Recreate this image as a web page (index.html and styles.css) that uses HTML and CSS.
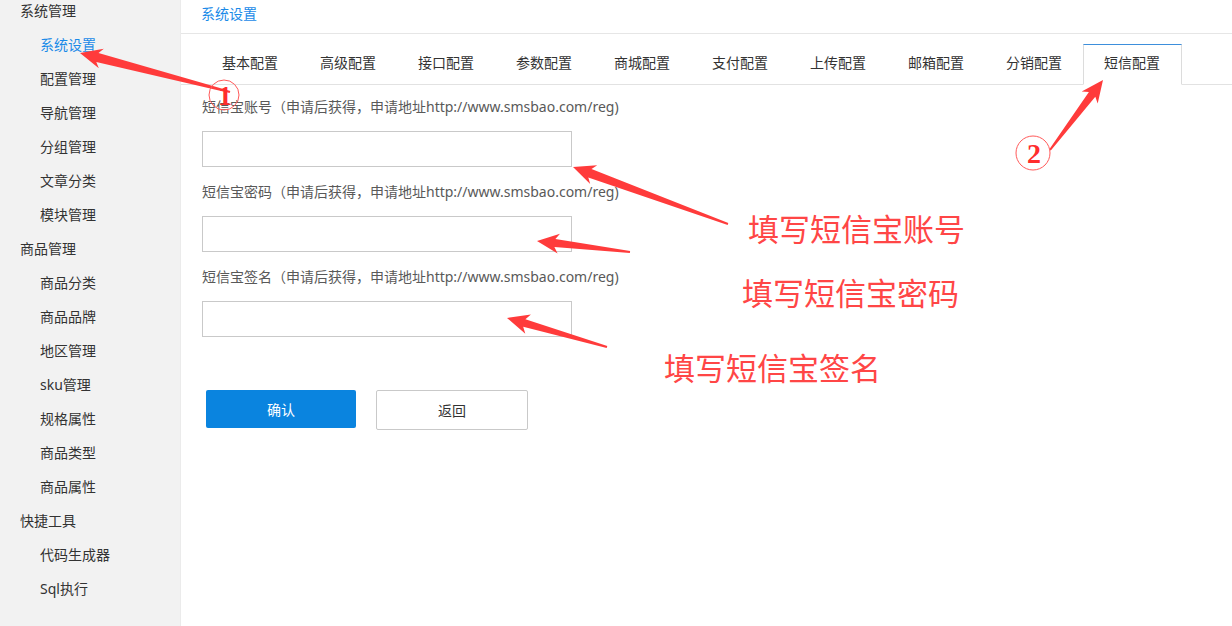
FILE: index.html
```html
<!DOCTYPE html>
<html lang="zh-CN">
<head>
    <meta charset="UTF-8">
    <meta name="viewport" content="width=device-width, initial-scale=1.0">
    <title>系统设置 - 短信配置</title>
    <link rel="stylesheet" href="styles.css">
</head>
<body>

    <div class="layout">
        <!-- Sidebar -->
        <aside class="sidebar">
            <ul class="menu">
                <li class="menu-group">系统管理</li>
                <li class="menu-item active">系统设置</li>
                <li class="menu-item">配置管理</li>
                <li class="menu-item">导航管理</li>
                <li class="menu-item">分组管理</li>
                <li class="menu-item">文章分类</li>
                <li class="menu-item">模块管理</li>
                <li class="menu-group">商品管理</li>
                <li class="menu-item">商品分类</li>
                <li class="menu-item">商品品牌</li>
                <li class="menu-item">地区管理</li>
                <li class="menu-item">sku管理</li>
                <li class="menu-item">规格属性</li>
                <li class="menu-item">商品类型</li>
                <li class="menu-item">商品属性</li>
                <li class="menu-group">快捷工具</li>
                <li class="menu-item">代码生成器</li>
                <li class="menu-item">Sql执行</li>
            </ul>
        </aside>

        <!-- Main content -->
        <main class="main">
            <div class="crumb"><a href="#">系统设置</a></div>

            <ul class="tabs">
                <li class="tab">基本配置</li>
                <li class="tab">高级配置</li>
                <li class="tab">接口配置</li>
                <li class="tab">参数配置</li>
                <li class="tab">商城配置</li>
                <li class="tab">支付配置</li>
                <li class="tab">上传配置</li>
                <li class="tab">邮箱配置</li>
                <li class="tab">分销配置</li>
                <li class="tab active">短信配置</li>
            </ul>

            <form class="form" method="POST" action="#">
                <div class="field">
                    <label for="sms_user">短信宝账号（申请后获得，申请地址http://www.smsbao.com/reg)</label>
                    <input type="text" id="sms_user" name="sms_user">
                </div>
                <div class="field">
                    <label for="sms_pass">短信宝密码（申请后获得，申请地址http://www.smsbao.com/reg)</label>
                    <input type="text" id="sms_pass" name="sms_pass">
                </div>
                <div class="field">
                    <label for="sms_sign">短信宝签名（申请后获得，申请地址http://www.smsbao.com/reg)</label>
                    <input type="text" id="sms_sign" name="sms_sign">
                </div>
                <div class="actions">
                    <button class="btn btn-primary" type="submit">确认</button>
                    <button class="btn btn-default" type="button">返回</button>
                </div>
            </form>
        </main>
    </div>

    <!-- Screenshot annotations -->
    <div class="notes">
        <svg class="arrows" width="1232" height="626" viewBox="0 0 1232 626">
            <g fill="#ff3b3b">
                <polygon points="80,53 103.8,48.8 98.5,53.1 230.3,91 229.7,93 96.3,61.9 98.8,68.2"/>
                <polygon points="1103,80 1097.7,103.5 1095.3,96.7 1050.8,150.6 1049.2,149.4 1088.9,91.9 1081.7,91.5"/>
                <polygon points="573,167 597.2,165.2 591.5,169 728.3,223.1 727.7,224.9 588.3,177.4 590.2,184"/>
                <polygon points="537,241 560,233.7 555.4,239.1 630.1,251 629.9,253 554.4,247.1 557.6,253.5"/>
                <polygon points="507,318 530.9,314.5 525.4,319.2 607.3,346 606.7,348 523.2,326.8 525.3,333.7"/>
            </g>
            <g fill="none" stroke="#ff5a5a" stroke-width="1">
                <circle cx="224" cy="95" r="15"/>
                <circle cx="1033" cy="153" r="17"/>
            </g>
            <g fill="#ff2d2d" font-family="Liberation Serif, serif" font-weight="bold" text-anchor="middle">
                <text x="225" y="105" font-size="28">1</text>
                <text x="1034" y="163" font-size="28">2</text>
            </g>
        </svg>
        <div class="note note-user">填写短信宝账号</div>
        <div class="note note-pass">填写短信宝密码</div>
        <div class="note note-sign">填写短信宝签名</div>
    </div>

</body>
</html>
```

FILE: styles.css
```css
* {
    box-sizing: border-box;
}

body {
    margin: 0;
    width: 1232px;
    height: 626px;
    overflow: hidden;
    position: relative;
    font-family: "Noto Sans", "Noto Sans CJK SC", sans-serif;
    font-size: 14px;
    color: #333;
    background-color: #fff;
}

ul {
    list-style: none;
    margin: 0;
    padding: 0;
}

.layout {
    display: flex;
    height: 626px;
}

/* Sidebar */
.sidebar {
    width: 181px;
    flex-shrink: 0;
    background-color: #f2f2f2;
    border-right: 1px solid #ebebeb;
    overflow: hidden;
}

.menu {
    margin-top: -6px;
}

.menu li {
    height: 34px;
    line-height: 34px;
    white-space: nowrap;
}

.menu-group {
    padding-left: 20px;
}

.menu-item {
    padding-left: 40px;
}

.menu-item.active {
    color: #1a8ae8;
}

/* Main */
.main {
    flex: 1;
    background-color: #fff;
}

.crumb {
    height: 34px;
    line-height: 28px;
    padding-left: 20px;
    border-bottom: 1px solid #e6e6e6;
}

.crumb a {
    color: #1a8ae8;
    text-decoration: none;
}

.tabs {
    display: flex;
    margin-top: 10px;
    padding-left: 20px;
    border-bottom: 1px solid #e2e2e2;
}

.tab {
    height: 41px;
    line-height: 36px;
    padding: 0 20px;
    margin-bottom: -1px;
    border: 1px solid transparent;
    white-space: nowrap;
}

.tab.active {
    padding: 0 21px 0 20px;
    border-color: #dcdcdc;
    border-top-color: #3d8fdc;
    border-bottom-color: #fff;
    background-color: #fff;
}

/* Form */
.form {
    padding: 10px 0 0 21px;
}

.field {
    margin-bottom: 13px;
}

.field label {
    display: block;
    line-height: 24px;
    margin-bottom: 12px;
    color: #595959;
    white-space: nowrap;
}

.field input {
    display: block;
    width: 370px;
    height: 36px;
    border: 1px solid #c9c9c9;
    border-radius: 0;
    padding: 0 10px;
    font: inherit;
    outline: none;
}

.actions {
    display: flex;
    align-items: flex-start;
    margin-top: 53px;
    padding-left: 4px;
}

.btn {
    font: inherit;
    cursor: pointer;
    border-radius: 2px;
}

.btn-primary {
    width: 150px;
    height: 38px;
    border: none;
    background-color: #0a84df;
    color: #fff;
}

.btn-default {
    width: 152px;
    height: 40px;
    margin-left: 20px;
    border: 1px solid #c9c9c9;
    background-color: #fff;
    color: #333;
}

/* Annotations drawn over the screenshot */
.notes {
    position: absolute;
    left: 0;
    top: 0;
    width: 1232px;
    height: 626px;
    pointer-events: none;
}

.arrows {
    position: absolute;
    left: 0;
    top: 0;
}

.note {
    position: absolute;
    font-family: "Noto Sans CJK SC", sans-serif;
    font-size: 31px;
    line-height: 31px;
    color: #ff4646;
    white-space: nowrap;
}

.note-user {
    left: 748px;
    top: 212px;
}

.note-pass {
    left: 742px;
    top: 276px;
}

.note-sign {
    left: 664px;
    top: 351px;
}
```
